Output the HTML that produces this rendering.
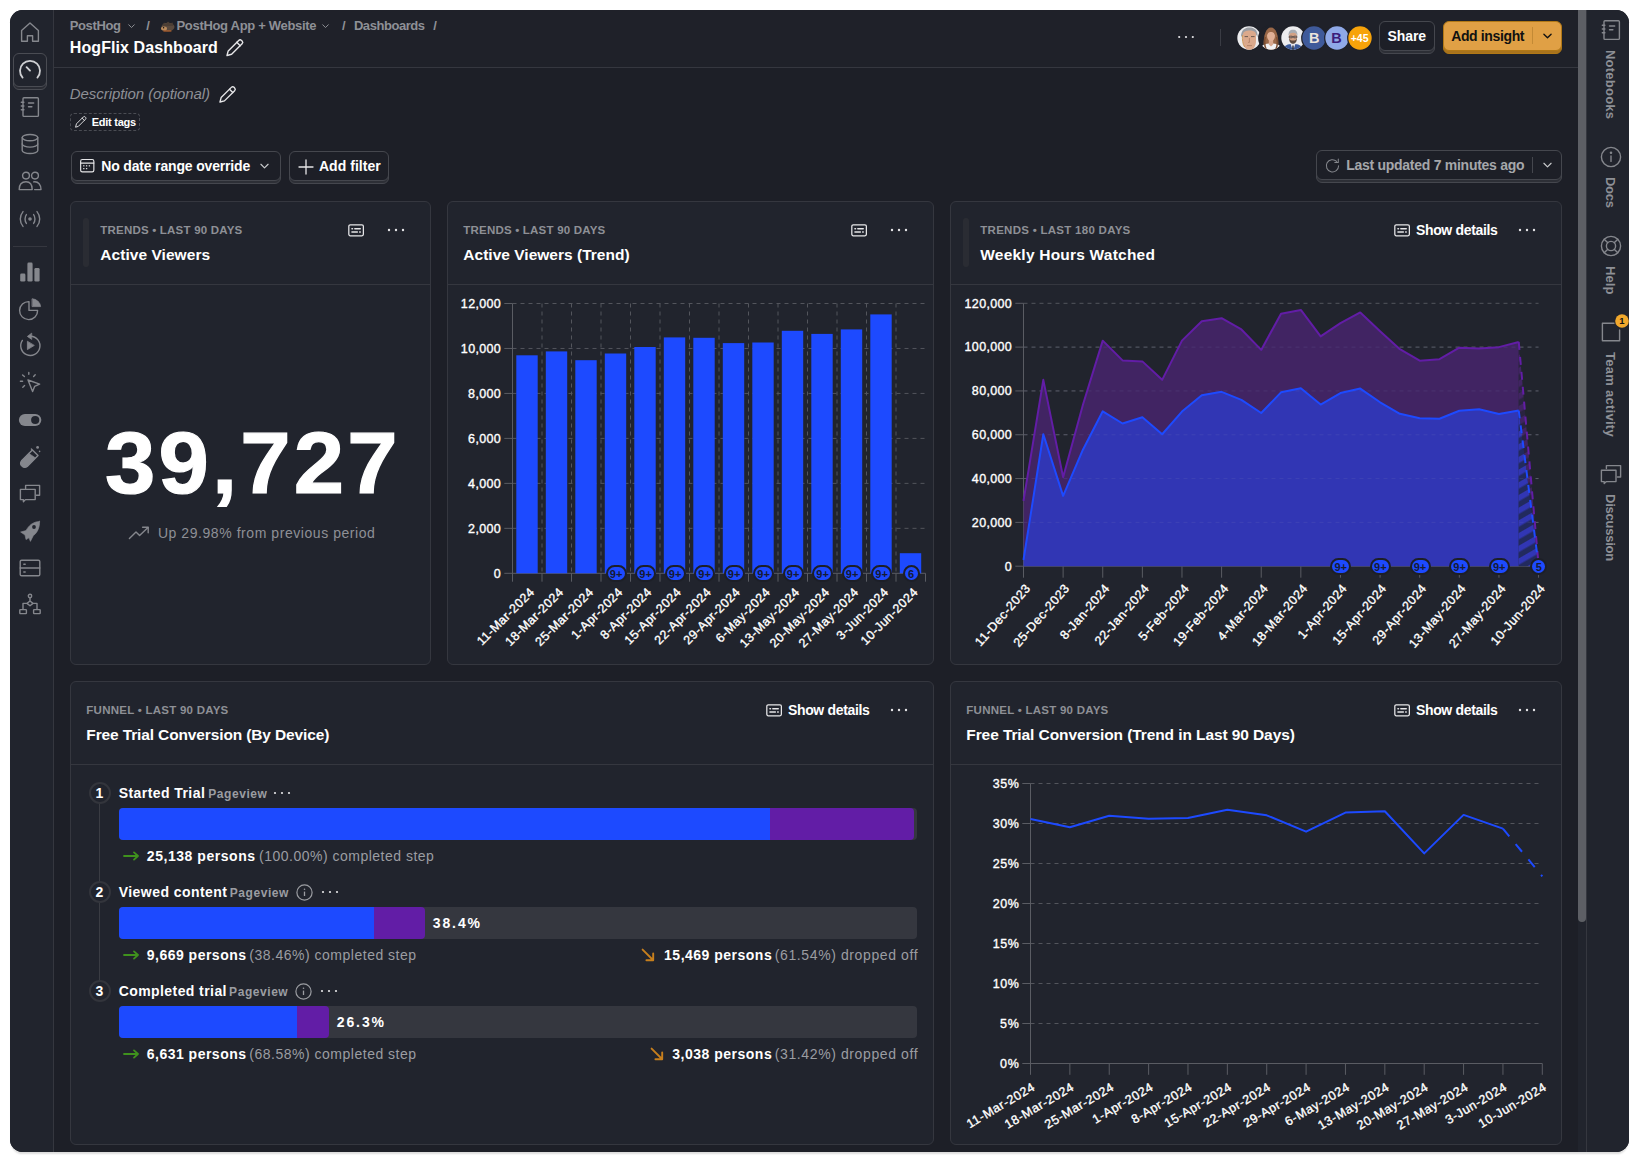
<!DOCTYPE html>
<html lang="en"><head><meta charset="utf-8"><title>HogFlix Dashboard • PostHog</title>
<style>

html,body{margin:0;padding:0;background:#fff;}
body{width:1639px;height:1162px;position:relative;overflow:hidden;font-family:"Liberation Sans", sans-serif;}
.t{position:absolute;white-space:nowrap;}
.abs{position:absolute;}
#win{position:absolute;left:10px;top:10px;width:1619px;height:1142px;background:#1d1f27;border-radius:12.5px;overflow:hidden;box-shadow:0 3px 2px -1px rgba(0,0,0,.14);}
.card{position:absolute;background:#21242d;border:1px solid #35373f;border-radius:6px;box-sizing:border-box;}
.hr{position:absolute;height:1px;background:#35373f;}
.vr{position:absolute;width:1px;background:#35373f;}
.btn{position:absolute;box-sizing:border-box;}
.btn .fr{position:absolute;left:0;right:0;top:3px;bottom:0;border-radius:6px;box-sizing:border-box;border:1px solid #45474e;background:#2d2f36;}
.btn .fc{position:absolute;left:0;right:0;top:0;bottom:3px;border-radius:6px;box-sizing:border-box;border:1px solid #45474e;background:#1d1f27;}
svg{position:absolute;overflow:visible;}
.ic{fill:none;stroke:#85878d;stroke-width:1.4;stroke-linecap:round;stroke-linejoin:round;}
.icw2{fill:none;stroke:#cfd0d3;stroke-width:1.4;stroke-linecap:round;stroke-linejoin:round;}
.icw{fill:none;stroke:#e6e6e8;stroke-width:1.4;stroke-linecap:round;stroke-linejoin:round;}

</style></head>
<body>
<header aria-label="Top bar">
<div id="win"></div>
<div class="abs" style="left:10px;top:10px;width:43px;height:1142px;background:#21242d;border-radius:12.5px 0 0 12.5px"></div>
<div class="vr" style="left:53px;top:10px;height:1142px"></div>
<div class="abs" style="left:54px;top:10px;width:1524px;height:57px;background:#1f2129"></div>
<div class="hr" style="left:54px;top:67px;width:1524px"></div>
<div class="abs" style="left:1578px;top:10px;width:8px;height:1142px;background:#21242d"></div>
<div class="abs" style="left:1578px;top:10px;width:8px;height:912px;background:#5d5f65;border-radius:0 0 4px 4px"></div>
<div class="abs" style="left:1586px;top:10px;width:43px;height:1142px;background:#21242d;border-radius:0 12.5px 12.5px 0"></div>
<div class="vr" style="left:1586px;top:10px;height:1142px"></div>
<span class="t" style="left:69.80px;top:16.80px;line-height:17px;font-size:13px;font-weight:700;color:#8e9096;letter-spacing:-0.392px;">PostHog</span>
<svg style="left:127.69999999999999px;top:22.650000000000002px" width="7" height="6.3" viewBox="0 0 10 9"><path d="M1 2.5L5 6.5L9 2.5" fill="none" stroke="#8e9096" stroke-width="1.4" stroke-linecap="round" stroke-linejoin="round"/></svg>
<span class="t" style="left:146.30px;top:16.80px;line-height:17px;font-size:13px;font-weight:700;color:#8e9096;">/</span>
<svg style="left:159.5px;top:19.5px" width="15" height="12" viewBox="0 0 15 12"><ellipse cx="8" cy="7" rx="6.5" ry="4.2" fill="#5a4a3e"/><path d="M2 6 L4 2.5 L6 4 L8 1.5 L10 3.5 L12.5 2.5 L13.5 6z" fill="#4d3f35"/><ellipse cx="4" cy="8.6" rx="3" ry="2" fill="#b98a5c"/><circle cx="3.6" cy="7.8" r=".7" fill="#111"/><path d="M3.4 11h8" stroke="#c4682c" stroke-width="1.1"/></svg>
<span class="t" style="left:176.50px;top:16.80px;line-height:17px;font-size:13px;font-weight:700;color:#8e9096;letter-spacing:-0.313px;">PostHog App + Website</span>
<svg style="left:322.4px;top:22.650000000000002px" width="7" height="6.3" viewBox="0 0 10 9"><path d="M1 2.5L5 6.5L9 2.5" fill="none" stroke="#8e9096" stroke-width="1.4" stroke-linecap="round" stroke-linejoin="round"/></svg>
<span class="t" style="left:342.00px;top:16.80px;line-height:17px;font-size:13px;font-weight:700;color:#8e9096;">/</span>
<span class="t" style="left:353.90px;top:16.80px;line-height:17px;font-size:13px;font-weight:700;color:#8e9096;letter-spacing:-0.438px;">Dashboards</span>
<span class="t" style="left:433.30px;top:16.80px;line-height:17px;font-size:13px;font-weight:700;color:#8e9096;">/</span>
<span class="t" style="left:69.80px;top:37.00px;line-height:21px;font-size:16px;font-weight:700;color:#fff;letter-spacing:0.088px;">HogFlix Dashboard</span>
<svg style="left:226.05px;top:39.05px" width="17.5" height="17.5" viewBox="3.5 3 17.5 17.5"><g class="icw" stroke-width="1.31"><path d="M4.5 19.5l1.2-4.6L16.2 4.4a2 2 0 0 1 2.8 0l.6.6a2 2 0 0 1 0 2.8L9.1 18.3z"/><path d="M14.3 6.3l3.4 3.4"/></g></svg>
<svg style="left:1175.7px;top:34.4px" width="20" height="6" viewBox="0 0 20 6"><circle cx="3.2" cy="3" r="1.1" fill="#e6e6e8"/><circle cx="10.0" cy="3" r="1.1" fill="#e6e6e8"/><circle cx="16.8" cy="3" r="1.1" fill="#e6e6e8"/></svg>
<div class="vr" style="left:1220px;top:29px;height:17px;background:#3a3c44"></div>
<svg style="left:1235.7px;top:24.700000000000003px" width="26" height="26" viewBox="0 0 26 26"><defs><clipPath id="c1248"><circle cx="13" cy="13" r="11.7"/></clipPath></defs><circle cx="13" cy="13" r="12.9" fill="#1f2129"/><circle cx="13" cy="13" r="11.7" fill="#ececee"/><g clip-path="url(#c1248)"><path d="M5 12C5 5 9 2.6 13.5 2.6S22 5 21.6 12L20 9.5H7z" fill="#9a9da3"/><path d="M7 9.6C7 6.6 10 5.6 13.6 5.6S20 6.8 20 9.6V16C20 21 17 25.5 13.6 25.5S7 21 7 16z" fill="#dba98c"/><path d="M8.6 11.6H12M15 11.6H18.6" stroke="#6d5a50" stroke-width="1"/><path d="M13.4 13V17.4H12.2M11 20.6H16" stroke="#b07f66" stroke-width=".9" fill="none"/><path d="M6.6 10C6 14 6.6 19 8.6 22" stroke="#c4863a" stroke-width=".8" fill="none"/></g></svg>
<svg style="left:1258px;top:24.700000000000003px" width="26" height="26" viewBox="0 0 26 26"><defs><clipPath id="c1271"><circle cx="13" cy="13" r="11.7"/></clipPath></defs><circle cx="13" cy="13" r="12.9" fill="#1f2129"/><circle cx="13" cy="13" r="11.7" fill="#1f2129"/><g clip-path="url(#c1271)"><path d="M6 26C4.6 15 6.6 2.4 13 2.4S21.4 15 20 26z" fill="#9a6848"/><path d="M1.6 27C2.2 19.6 7 18.4 13 18.4S23.8 19.6 24.4 27z" fill="#f2f2f4"/><path d="M10.8 14.6H15.2V19.6L13 21.4L10.8 19.6z" fill="#d9a88e"/><ellipse cx="13" cy="10.8" rx="4" ry="5.4" fill="#e0b096"/><path d="M8.4 11.6C8.2 6 10 4 13 4S17.8 6 17.6 11.6C16.6 7.8 15 6.8 13 7C11 6.8 9.4 7.8 8.4 11.6z" fill="#9a6848"/><path d="M7.2 12C6.2 17 6.8 22 8.4 25M18.8 12C19.8 17 19.2 22 17.6 25" stroke="#7a4c30" stroke-width="1.5" fill="none"/></g></svg>
<svg style="left:1280.3px;top:24.700000000000003px" width="26" height="26" viewBox="0 0 26 26"><defs><clipPath id="c1293"><circle cx="13" cy="13" r="11.7"/></clipPath></defs><circle cx="13" cy="13" r="12.9" fill="#1f2129"/><circle cx="13" cy="13" r="11.7" fill="#ececee"/><g clip-path="url(#c1293)"><path d="M2.6 27C3 20.4 7 19 13 19S23 20.4 23.4 27z" fill="#3b5a9a"/><path d="M10.6 19L13 26L15.4 19z" fill="#e8e8ee"/><path d="M12.4 20.4H13.6L14 26H12z" fill="#1d2438"/><ellipse cx="13" cy="12" rx="4.2" ry="5.4" fill="#d3a184"/><path d="M8.6 11C8.2 6.6 10 4.8 13 4.8S17.8 6.6 17.4 11C16.8 8.6 15.6 7.8 13 7.8S9.2 8.6 8.6 11z" fill="#a9acb2"/><path d="M9 13.6C9.4 17.6 11 18.8 13 18.8S16.6 17.6 17 13.6C16 15.4 14.6 15.6 13 15.6S10 15.4 9 13.6z" fill="#5d4a3e"/><path d="M9.2 11.2H12.2V12.8H9.2zM13.8 11.2H16.8V12.8H13.8zM12.2 11.8H13.8" stroke="#3a3a40" stroke-width=".7" fill="none"/></g></svg>
<svg style="left:1301.2px;top:24.700000000000003px" width="26" height="26" viewBox="0 0 26 26"><circle cx="13" cy="13" r="12.9" fill="#1f2129"/><circle cx="13" cy="13" r="11.7" fill="#3f5a9a"/></svg>
<span class="t" style="left:1314.20px;transform:translateX(-50%);top:28.50px;line-height:19px;font-size:14.5px;font-weight:700;color:#ece4dc;">B</span>
<svg style="left:1323.5px;top:24.700000000000003px" width="26" height="26" viewBox="0 0 26 26"><circle cx="13" cy="13" r="12.9" fill="#1f2129"/><circle cx="13" cy="13" r="11.7" fill="#8fa9e8"/></svg>
<span class="t" style="left:1336.50px;transform:translateX(-50%);top:28.50px;line-height:19px;font-size:14.5px;font-weight:700;color:#3b1c7a;">B</span>
<svg style="left:1346.6px;top:24.700000000000003px" width="26" height="26" viewBox="0 0 26 26"><circle cx="13" cy="13" r="12.9" fill="#1f2129"/><circle cx="13" cy="13" r="11.7" fill="#f7a30a"/></svg>
<span class="t" style="left:1359.60px;transform:translateX(-50%);top:31.00px;line-height:14px;font-size:10.5px;font-weight:700;color:#fff;">+45</span>
<div class="btn " style="left:1379px;top:21px;width:56px;height:33px"><div class="fr"></div><div class="fc"></div></div>
<span class="t" style="left:1387.50px;top:26.60px;line-height:18px;font-size:14px;font-weight:700;color:#fff;letter-spacing:-0.080px;">Share</span>
<div class="btn" style="left:1443px;top:21px;width:119px;height:33px"><div class="fr" style="background:#a8731d;border-color:#b17816"></div><div class="fc" style="background:#e0a045;border-color:#b17816"></div></div>
<span class="t" style="left:1451.20px;top:26.60px;line-height:18px;font-size:14px;font-weight:700;color:#111;letter-spacing:-0.370px;">Add insight</span>
<div class="vr" style="left:1532px;top:27px;height:17px;background:#c38a35"></div>
<svg style="left:1542.5px;top:32.25px" width="9" height="8.1" viewBox="0 0 10 9"><path d="M1 2.5L5 6.5L9 2.5" fill="none" stroke="#111" stroke-width="1.5" stroke-linecap="round" stroke-linejoin="round"/></svg>
</header>
<nav aria-label="Main navigation">
<svg style="left:18.0px;top:20.0px" width="24" height="24" viewBox="0 0 24 24"><g class="ic"><path d="M3.6 10.5 L12 3 L20.4 10.5 V21.2 H14.6 V15.8 H9.4 V21.2 H3.6z"/></g></svg>
<div class="btn" style="left:13px;top:53px;width:34px;height:37px"><div class="fr" style="border-color:#4a4c53;background:#2a2c34"></div><div class="fc" style="border-color:#4a4c53;background:#21242d"></div></div>
<svg style="left:18.0px;top:58.0px" width="24" height="24" viewBox="0 0 24 24"><g class="icw2"><path d="M4.6 19.6 A10 10 0 1 1 19.4 19.6" stroke-width="1.8"/><path d="M8.6 9.2 L12 12.6" stroke-width="1.9"/></g></svg>
<svg style="left:18.0px;top:95.0px" width="24" height="24" viewBox="0 0 24 24"><g class="ic"><rect x="5" y="2.8" width="15.4" height="18.6" rx="1"/><path d="M3.3 7.2h2.6M3.3 11h2.6M3.3 14.8h2.6M10.5 8h5.2M10.5 11.8h3.4"/></g></svg>
<svg style="left:18.0px;top:132.0px" width="24" height="24" viewBox="0 0 24 24"><g class="ic"><ellipse cx="12" cy="5.6" rx="7.8" ry="3.1"/><path d="M4.2 5.6V18.4C4.2 20.1 7.7 21.5 12 21.5S19.8 20.1 19.8 18.4V5.6"/><path d="M4.2 12C4.2 13.7 7.7 15.1 12 15.1S19.8 13.7 19.8 12"/></g></svg>
<svg style="left:18.0px;top:169.3px" width="24" height="24" viewBox="0 0 24 24"><g class="ic"><circle cx="8" cy="6.6" r="3.4"/><circle cx="17" cy="6.6" r="3.4"/><path d="M1.2 20.6C1.2 15.6 4 12.8 8 12.8S14.2 15.6 14.2 20.6z"/><path d="M15.6 12.9C20.5 12.2 23 15.8 23 20.6H16.6"/></g></svg>
<svg style="left:18.0px;top:206.5px" width="24" height="24" viewBox="0 0 24 24"><g class="ic"><circle cx="12" cy="12" r="1.1" fill="#85878d"/><path d="M8.4 7.6C6.6 10 6.6 14 8.4 16.4M15.6 7.6C17.4 10 17.4 14 15.6 16.4M5 4.6C1.4 9 1.4 15 5 19.4M19 4.6C22.6 9 22.6 15 19 19.4"/></g></svg>
<div class="hr" style="left:13px;top:246px;width:34px"></div>
<svg style="left:18.0px;top:260.0px" width="24" height="24" viewBox="0 0 24 24"><g class="ic"><rect x="2.2" y="13.6" width="5.2" height="8" rx="1.3" fill="#85878d" stroke="none"/><rect x="9.4" y="2.6" width="5.2" height="19" rx="1.3" fill="#85878d" stroke="none"/><rect x="16.4" y="8" width="5.2" height="13.6" rx="1.3" fill="#85878d" stroke="none"/></g></svg>
<svg style="left:18.0px;top:297.0px" width="24" height="24" viewBox="0 0 24 24"><g class="ic"><path d="M11 4.6A9 9 0 1 0 19.6 13.4H11z"/><path d="M14.4 1.8A8.6 8.6 0 0 1 22.6 9.6H14.4z" fill="#85878d" stroke-width=".8"/></g></svg>
<svg style="left:18.0px;top:333.0px" width="24" height="24" viewBox="0 0 24 24"><g class="ic"><path d="M12.6 3.2A9.6 9.6 0 1 1 4.4 7.4"/><path d="M13.4 0.4L9.4 3.4L13.4 6.2z" fill="#85878d" stroke-width=".8"/><path d="M9.4 8.6V16.6L16 12.6z" fill="#85878d" stroke-width=".8"/></g></svg>
<svg style="left:18.0px;top:370.0px" width="24" height="24" viewBox="0 0 24 24"><g class="ic"><path d="M10 10L21.6 14.2L16.6 16.4L14.6 21.6z"/><path d="M10.8 2.4V4.2M4.6 5L6.4 6.6M17.2 4.8L15.6 6.4M2.4 11.2h2.2M4.8 17.2L6.6 15.6"/></g></svg>
<svg style="left:18.0px;top:408.0px" width="24" height="24" viewBox="0 0 24 24"><g class="ic"><rect x="0.9" y="6" width="22.4" height="12" rx="6" fill="#85878d" stroke="none"/><circle cx="17.2" cy="12" r="4.1" fill="#21242d" stroke="none"/></g></svg>
<svg style="left:18.0px;top:444.5px" width="24" height="24" viewBox="0 0 24 24"><g class="ic"><path d="M13.4 4L20 10.6M14.4 5L3.6 15.8A4 4 0 0 0 9.2 21.4L20 10.6" /><path d="M11 8.4L17.6 13L9.2 21.4A4 4 0 0 1 3.6 15.8z" fill="#85878d" stroke-width=".6"/><circle cx="19.6" cy="2.4" r="1.4" fill="#85878d" stroke="none"/><circle cx="21.6" cy="6.4" r=".8" fill="#85878d" stroke="none"/></g></svg>
<svg style="left:18.0px;top:482.0px" width="24" height="24" viewBox="0 0 24 24"><g class="ic"><path d="M7.6 6.4V3.4H21.6V13.2H18.4"/><path d="M2.4 7.4H17.2V17.6H7.4L5.4 19.8V17.6H2.4z"/></g></svg>
<svg style="left:18.0px;top:519.0px" width="24" height="24" viewBox="0 0 24 24"><g class="ic"><path d="M21.6 2.4C15 2.6 10.6 6.6 8 11.6L2.6 13L7 16L8 20.6L11 18.8L12.4 22.4L15.4 16.6C19.4 13.6 21.8 8.4 21.6 2.4z" fill="#85878d" stroke-width=".6"/><circle cx="16" cy="8" r="1.9" fill="#21242d" stroke="none"/></g></svg>
<svg style="left:18.0px;top:556.0px" width="24" height="24" viewBox="0 0 24 24"><g class="ic"><rect x="2.2" y="4.2" width="19.6" height="15.6" rx="1.4"/><path d="M2.2 12H21.8M5.8 8.2H7.2M5.8 16H7.2"/></g></svg>
<svg style="left:18.0px;top:593.0px" width="24" height="24" viewBox="0 0 24 24"><g class="ic"><circle cx="12" cy="3" r="1.7"/><path d="M12 4.8V8M12 8L15 10.4L12 12.8L9 10.4zM9 10.4H5V16.4M15 10.4H19V16.4"/><rect x="1.8" y="16.6" width="6.6" height="4" rx=".6"/><rect x="15.6" y="16.6" width="6.6" height="4" rx=".6"/></g></svg>
</nav>
<aside aria-label="Side panel">
<svg style="left:1598.7px;top:18.0px" width="24" height="24" viewBox="0 0 24 24"><g class="ic"><rect x="5" y="2.8" width="15.4" height="18.6" rx="1"/><path d="M3.3 7.2h2.6M3.3 11h2.6M3.3 14.8h2.6M10.5 8h5.2M10.5 11.8h3.4"/></g></svg>
<span class="t" style="left:1618.00px;top:50.30px;line-height:16px;font-size:13px;font-weight:700;color:#8e9096;letter-spacing:0.229px;transform-origin:0 0;transform:rotate(90deg)">Notebooks</span>
<svg style="left:1598.7px;top:145.2px" width="24" height="24" viewBox="0 0 24 24"><g class="ic"><circle cx="12" cy="12" r="9.6"/><path d="M12 11v5.4"/><circle cx="12" cy="7.8" r=".6" fill="#85878d"/></g></svg>
<span class="t" style="left:1618.00px;top:176.90px;line-height:16px;font-size:13px;font-weight:700;color:#8e9096;letter-spacing:-0.266px;transform-origin:0 0;transform:rotate(90deg)">Docs</span>
<svg style="left:1598.7px;top:234.0px" width="24" height="24" viewBox="0 0 24 24"><g class="ic"><circle cx="12" cy="12" r="9.6"/><circle cx="12" cy="12" r="4.6"/><path d="M5.2 5.2L8.8 8.8M18.8 5.2L15.2 8.8M5.2 18.8L8.8 15.2M18.8 18.8L15.2 15.2"/></g></svg>
<span class="t" style="left:1618.00px;top:266.00px;line-height:16px;font-size:13px;font-weight:700;color:#8e9096;letter-spacing:0.076px;transform-origin:0 0;transform:rotate(90deg)">Help</span>
<svg style="left:1598.7px;top:319.7px" width="24" height="24" viewBox="0 0 24 24"><g class="ic"><path d="M15 3.2H3.4V20.8H20.6V10"/></g></svg>
<svg style="left:1614.9px;top:314.3px" width="14" height="14" viewBox="0 0 14 14"><circle cx="7" cy="7" r="6.8" fill="#f1a82c"/></svg>
<span class="t" style="left:1621.90px;transform:translateX(-50%);top:315.40px;line-height:12px;font-size:9.5px;font-weight:700;color:#111;">1</span>
<span class="t" style="left:1618.00px;top:351.60px;line-height:16px;font-size:13px;font-weight:700;color:#8e9096;letter-spacing:0.273px;transform-origin:0 0;transform:rotate(90deg)">Team activity</span>
<svg style="left:1598.7px;top:462.5px" width="24" height="24" viewBox="0 0 24 24"><g class="ic"><path d="M7.4 5.6V2.6H21.6V14H18.4"/><path d="M2.4 7.2H17V18.6H7.4L5.2 20.6V18.6H2.4z"/></g></svg>
<span class="t" style="left:1618.00px;top:493.60px;line-height:16px;font-size:13px;font-weight:700;color:#8e9096;letter-spacing:-0.240px;transform-origin:0 0;transform:rotate(90deg)">Discussion</span>
</aside>
<main>
<section aria-label="Dashboard controls">
<span class="t" style="left:69.80px;top:84.00px;line-height:20px;font-size:15px;font-weight:400;color:#8e9096;font-style:italic;letter-spacing:-0.068px;">Description (optional)</span>
<svg style="left:219.3px;top:85.5px" width="17" height="17" viewBox="3.5 3 17.5 17.5"><g class="icw" stroke-width="1.35"><path d="M4.5 19.5l1.2-4.6L16.2 4.4a2 2 0 0 1 2.8 0l.6.6a2 2 0 0 1 0 2.8L9.1 18.3z"/><path d="M14.3 6.3l3.4 3.4"/></g></svg>
<div class="abs" style="left:70px;top:113px;width:70px;height:18px;border:1px dashed #4a4c53;border-radius:4px;box-sizing:border-box"></div>
<svg style="left:75.05px;top:116.25px" width="11.5" height="11.5" viewBox="3.5 3 17.5 17.5"><g class="icw" stroke-width="2.00"><path d="M4.5 19.5l1.2-4.6L16.2 4.4a2 2 0 0 1 2.8 0l.6.6a2 2 0 0 1 0 2.8L9.1 18.3z"/><path d="M14.3 6.3l3.4 3.4"/></g></svg>
<span class="t" style="left:91.80px;top:115.00px;line-height:14px;font-size:11px;font-weight:700;color:#fff;letter-spacing:-0.269px;">Edit tags</span>
<div class="btn " style="left:71px;top:151px;width:210px;height:33px"><div class="fr"></div><div class="fc"></div></div>
<svg style="left:79px;top:157.3px" width="16.5" height="16.5" viewBox="0 0 20 20"><g class="icw" stroke-width="1.3"><rect x="2" y="3" width="16" height="15" rx="2"/><path d="M2 7.4H18"/></g><g fill="#e6e6e8"><rect x="5" y="10" width="1.6" height="1.4"/><rect x="8.4" y="10" width="1.6" height="1.4"/><rect x="11.8" y="10" width="1.6" height="1.4"/><rect x="5" y="13.4" width="1.6" height="1.4"/><rect x="8.4" y="13.4" width="1.6" height="1.4"/></g></svg>
<span class="t" style="left:101.20px;top:157.00px;line-height:18px;font-size:14px;font-weight:700;color:#fff;letter-spacing:-0.162px;">No date range override</span>
<svg style="left:259.5px;top:162.25px" width="9" height="8.1" viewBox="0 0 10 9"><path d="M1 2.5L5 6.5L9 2.5" fill="none" stroke="#c9cacd" stroke-width="1.3" stroke-linecap="round" stroke-linejoin="round"/></svg>
<div class="btn " style="left:289px;top:151px;width:100px;height:33px"><div class="fr"></div><div class="fc"></div></div>
<svg style="left:298px;top:158.5px" width="16" height="16" viewBox="0 0 16 16"><path d="M8 1V15M1 8H15" stroke="#e6e6e8" stroke-width="1.3" stroke-linecap="round"/></svg>
<span class="t" style="left:318.90px;top:157.00px;line-height:18px;font-size:14px;font-weight:700;color:#fff;letter-spacing:0.050px;">Add filter</span>
<div class="btn " style="left:1315.5px;top:150px;width:246.5px;height:33px"><div class="fr"></div><div class="fc"></div></div>
<svg style="left:1323.8px;top:156.8px" width="17.5" height="17.5" viewBox="0 0 24 24"><g class="ic" stroke="#a5a7ab" stroke-width="1.7"><path d="M20 12a8.4 8.4 0 1 1 -2.6 -6"/><path d="M19.6 2.6V7.4H14.8"/></g></svg>
<span class="t" style="left:1346.20px;top:156.00px;line-height:18px;font-size:14px;font-weight:700;color:#a5a7ab;letter-spacing:-0.270px;">Last updated 7 minutes ago</span>
<div class="vr" style="left:1532px;top:157px;height:16px;background:#45474e"></div>
<svg style="left:1542.5px;top:161.45px" width="9" height="8.1" viewBox="0 0 10 9"><path d="M1 2.5L5 6.5L9 2.5" fill="none" stroke="#c9cacd" stroke-width="1.3" stroke-linecap="round" stroke-linejoin="round"/></svg>
</section>
<section aria-label="Active Viewers">
<div class="card" style="left:70px;top:201px;width:361px;height:464px"></div>
<div class="hr" style="left:71px;top:284px;width:359px"></div>
<div class="abs" style="left:83px;top:218px;width:6px;height:49px;background:#2a2c33;border-radius:3px"></div>
<span class="t" style="left:100.30px;top:222.50px;line-height:15px;font-size:11.5px;font-weight:700;color:#8e9096;letter-spacing:0.209px;">TRENDS • LAST 90 DAYS</span>
<span class="t" style="left:100.30px;top:245.00px;line-height:20px;font-size:15.5px;font-weight:700;color:#fff;letter-spacing:0.050px;">Active Viewers</span>
<svg style="left:386px;top:227px" width="20" height="6" viewBox="0 0 20 6"><circle cx="3.0" cy="3" r="1.2" fill="#e6e6e8"/><circle cx="10.0" cy="3" r="1.2" fill="#e6e6e8"/><circle cx="17.0" cy="3" r="1.2" fill="#e6e6e8"/></svg>
<svg style="left:347.8px;top:223.5px" width="16.2" height="12.6" viewBox="0 0 18 14"><g class="icw" stroke-width="1.6"><rect x=".9" y=".9" width="16.2" height="12.2" rx="1.6"/><path d="M4.4 5.4H5M7.6 5.4H13.6M4.4 8.8H10.4M13 8.8H13.6" stroke-width="1.7"/></g></svg>
<span class="t" style="left:105.00px;top:417.80px;line-height:90px;font-size:87px;font-weight:700;color:#fff;letter-spacing:3.038px;-webkit-text-stroke:1.2px #fff;transform-origin:0 50%;transform:scaleX(1.04);">39,727</span>
<svg style="left:127.5px;top:524.5px" width="22" height="16" viewBox="0 0 22 16"><g class="ic" stroke="#8e9096" stroke-width="1.5"><path d="M1.4 13.6L8 7L11.6 10.6L20 2.4"/><path d="M14.6 2.2H20.2V7.8"/></g></svg>
<span class="t" style="left:157.90px;top:524.40px;line-height:18px;font-size:14px;font-weight:400;color:#8e9096;letter-spacing:0.559px;">Up 29.98% from previous period</span>
</section>
<section aria-label="Active Viewers (Trend)">
<div class="card" style="left:447px;top:201px;width:487px;height:464px"></div>
<div class="hr" style="left:448px;top:284px;width:485px"></div>
<span class="t" style="left:463.30px;top:222.50px;line-height:15px;font-size:11.5px;font-weight:700;color:#8e9096;letter-spacing:0.209px;">TRENDS • LAST 90 DAYS</span>
<span class="t" style="left:463.30px;top:245.00px;line-height:20px;font-size:15.5px;font-weight:700;color:#fff;letter-spacing:0.015px;">Active Viewers (Trend)</span>
<svg style="left:889px;top:227px" width="20" height="6" viewBox="0 0 20 6"><circle cx="3.0" cy="3" r="1.2" fill="#e6e6e8"/><circle cx="10.0" cy="3" r="1.2" fill="#e6e6e8"/><circle cx="17.0" cy="3" r="1.2" fill="#e6e6e8"/></svg>
<svg style="left:850.8px;top:223.5px" width="16.2" height="12.6" viewBox="0 0 18 14"><g class="icw" stroke-width="1.6"><rect x=".9" y=".9" width="16.2" height="12.2" rx="1.6"/><path d="M4.4 5.4H5M7.6 5.4H13.6M4.4 8.8H10.4M13 8.8H13.6" stroke-width="1.7"/></g></svg>
<svg style="left:0px;top:0px" width="1639" height="1162" viewBox="0 0 1639 1162"><line x1="512.5" y1="303.5" x2="925.5" y2="303.5" stroke="#53555c" stroke-width="1" stroke-dasharray="4 4"/><line x1="512.5" y1="348.46666666666664" x2="925.5" y2="348.46666666666664" stroke="#53555c" stroke-width="1" stroke-dasharray="4 4"/><line x1="512.5" y1="393.43333333333334" x2="925.5" y2="393.43333333333334" stroke="#53555c" stroke-width="1" stroke-dasharray="4 4"/><line x1="512.5" y1="438.4" x2="925.5" y2="438.4" stroke="#53555c" stroke-width="1" stroke-dasharray="4 4"/><line x1="512.5" y1="483.3666666666667" x2="925.5" y2="483.3666666666667" stroke="#53555c" stroke-width="1" stroke-dasharray="4 4"/><line x1="512.5" y1="528.3333333333333" x2="925.5" y2="528.3333333333333" stroke="#53555c" stroke-width="1" stroke-dasharray="4 4"/><line x1="504.3" y1="303.5" x2="512.5" y2="303.5" stroke="#5a5c63" stroke-width="1"/><line x1="504.3" y1="348.46666666666664" x2="512.5" y2="348.46666666666664" stroke="#5a5c63" stroke-width="1"/><line x1="504.3" y1="393.43333333333334" x2="512.5" y2="393.43333333333334" stroke="#5a5c63" stroke-width="1"/><line x1="504.3" y1="438.4" x2="512.5" y2="438.4" stroke="#5a5c63" stroke-width="1"/><line x1="504.3" y1="483.3666666666667" x2="512.5" y2="483.3666666666667" stroke="#5a5c63" stroke-width="1"/><line x1="504.3" y1="528.3333333333333" x2="512.5" y2="528.3333333333333" stroke="#5a5c63" stroke-width="1"/><line x1="504.3" y1="573.3" x2="512.5" y2="573.3" stroke="#5a5c63" stroke-width="1"/><line x1="542.0" y1="303.5" x2="542.0" y2="573.3" stroke="#53555c" stroke-width="1" stroke-dasharray="4 4"/><line x1="571.5" y1="303.5" x2="571.5" y2="573.3" stroke="#53555c" stroke-width="1" stroke-dasharray="4 4"/><line x1="601.0" y1="303.5" x2="601.0" y2="573.3" stroke="#53555c" stroke-width="1" stroke-dasharray="4 4"/><line x1="630.5" y1="303.5" x2="630.5" y2="573.3" stroke="#53555c" stroke-width="1" stroke-dasharray="4 4"/><line x1="660.0" y1="303.5" x2="660.0" y2="573.3" stroke="#53555c" stroke-width="1" stroke-dasharray="4 4"/><line x1="689.5" y1="303.5" x2="689.5" y2="573.3" stroke="#53555c" stroke-width="1" stroke-dasharray="4 4"/><line x1="719.0" y1="303.5" x2="719.0" y2="573.3" stroke="#53555c" stroke-width="1" stroke-dasharray="4 4"/><line x1="748.5" y1="303.5" x2="748.5" y2="573.3" stroke="#53555c" stroke-width="1" stroke-dasharray="4 4"/><line x1="778.0" y1="303.5" x2="778.0" y2="573.3" stroke="#53555c" stroke-width="1" stroke-dasharray="4 4"/><line x1="807.5" y1="303.5" x2="807.5" y2="573.3" stroke="#53555c" stroke-width="1" stroke-dasharray="4 4"/><line x1="837.0" y1="303.5" x2="837.0" y2="573.3" stroke="#53555c" stroke-width="1" stroke-dasharray="4 4"/><line x1="866.5" y1="303.5" x2="866.5" y2="573.3" stroke="#53555c" stroke-width="1" stroke-dasharray="4 4"/><line x1="896.0" y1="303.5" x2="896.0" y2="573.3" stroke="#53555c" stroke-width="1" stroke-dasharray="4 4"/><line x1="512.5" y1="303.5" x2="512.5" y2="581.6999999999999" stroke="#5a5c63" stroke-width="1"/><line x1="512.5" y1="573.3" x2="925.5" y2="573.3" stroke="#5a5c63" stroke-width="1"/><line x1="542.0" y1="573.3" x2="542.0" y2="581.6999999999999" stroke="#5a5c63" stroke-width="1"/><line x1="571.5" y1="573.3" x2="571.5" y2="581.6999999999999" stroke="#5a5c63" stroke-width="1"/><line x1="601.0" y1="573.3" x2="601.0" y2="581.6999999999999" stroke="#5a5c63" stroke-width="1"/><line x1="630.5" y1="573.3" x2="630.5" y2="581.6999999999999" stroke="#5a5c63" stroke-width="1"/><line x1="660.0" y1="573.3" x2="660.0" y2="581.6999999999999" stroke="#5a5c63" stroke-width="1"/><line x1="689.5" y1="573.3" x2="689.5" y2="581.6999999999999" stroke="#5a5c63" stroke-width="1"/><line x1="719.0" y1="573.3" x2="719.0" y2="581.6999999999999" stroke="#5a5c63" stroke-width="1"/><line x1="748.5" y1="573.3" x2="748.5" y2="581.6999999999999" stroke="#5a5c63" stroke-width="1"/><line x1="778.0" y1="573.3" x2="778.0" y2="581.6999999999999" stroke="#5a5c63" stroke-width="1"/><line x1="807.5" y1="573.3" x2="807.5" y2="581.6999999999999" stroke="#5a5c63" stroke-width="1"/><line x1="837.0" y1="573.3" x2="837.0" y2="581.6999999999999" stroke="#5a5c63" stroke-width="1"/><line x1="866.5" y1="573.3" x2="866.5" y2="581.6999999999999" stroke="#5a5c63" stroke-width="1"/><line x1="896.0" y1="573.3" x2="896.0" y2="581.6999999999999" stroke="#5a5c63" stroke-width="1"/><line x1="925.5" y1="573.3" x2="925.5" y2="581.6999999999999" stroke="#5a5c63" stroke-width="1"/><rect x="516.30" y="355.3" width="21.4" height="218.00" fill="#1d4aff"/><rect x="545.80" y="351.4" width="21.4" height="221.90" fill="#1d4aff"/><rect x="575.30" y="360.2" width="21.4" height="213.10" fill="#1d4aff"/><rect x="604.80" y="353.5" width="21.4" height="219.80" fill="#1d4aff"/><rect x="634.30" y="347.0" width="21.4" height="226.30" fill="#1d4aff"/><rect x="663.80" y="337.4" width="21.4" height="235.90" fill="#1d4aff"/><rect x="693.30" y="337.8" width="21.4" height="235.50" fill="#1d4aff"/><rect x="722.80" y="343.1" width="21.4" height="230.20" fill="#1d4aff"/><rect x="752.30" y="342.5" width="21.4" height="230.80" fill="#1d4aff"/><rect x="781.80" y="330.8" width="21.4" height="242.50" fill="#1d4aff"/><rect x="811.30" y="333.9" width="21.4" height="239.40" fill="#1d4aff"/><rect x="840.80" y="329.4" width="21.4" height="243.90" fill="#1d4aff"/><rect x="870.30" y="314.4" width="21.4" height="258.90" fill="#1d4aff"/><rect x="899.80" y="553.2" width="21.4" height="20.10" fill="#1d4aff"/></svg>
<span class="t" style="right:1138.20px;margin-right:-0.344px;top:295.80px;line-height:16px;font-size:12.5px;font-weight:400;color:#fff;letter-spacing:0.344px;-webkit-text-stroke:0.35px #fff;">12,000</span>
<span class="t" style="right:1138.20px;margin-right:-0.344px;top:340.77px;line-height:16px;font-size:12.5px;font-weight:400;color:#fff;letter-spacing:0.344px;-webkit-text-stroke:0.35px #fff;">10,000</span>
<span class="t" style="right:1138.20px;margin-right:-0.352px;top:385.73px;line-height:16px;font-size:12.5px;font-weight:400;color:#fff;letter-spacing:0.352px;-webkit-text-stroke:0.35px #fff;">8,000</span>
<span class="t" style="right:1138.20px;margin-right:-0.352px;top:430.70px;line-height:16px;font-size:12.5px;font-weight:400;color:#fff;letter-spacing:0.352px;-webkit-text-stroke:0.35px #fff;">6,000</span>
<span class="t" style="right:1138.20px;margin-right:-0.352px;top:475.67px;line-height:16px;font-size:12.5px;font-weight:400;color:#fff;letter-spacing:0.352px;-webkit-text-stroke:0.35px #fff;">4,000</span>
<span class="t" style="right:1138.20px;margin-right:-0.352px;top:520.63px;line-height:16px;font-size:12.5px;font-weight:400;color:#fff;letter-spacing:0.352px;-webkit-text-stroke:0.35px #fff;">2,000</span>
<span class="t" style="right:1138.20px;margin-right:-0.313px;top:565.60px;line-height:16px;font-size:12.5px;font-weight:400;color:#fff;letter-spacing:0.313px;-webkit-text-stroke:0.35px #fff;">0</span>
<span class="t" style="right:1107.35px;margin-right:-0.424px;top:583.20px;line-height:14px;font-size:12.5px;font-weight:400;color:#fff;letter-spacing:0.424px;transform-origin:100% 50%;transform:rotate(-45deg);-webkit-text-stroke:0.35px #fff;">11-Mar-2024</span>
<span class="t" style="right:1077.85px;margin-right:-0.429px;top:583.20px;line-height:14px;font-size:12.5px;font-weight:400;color:#fff;letter-spacing:0.429px;transform-origin:100% 50%;transform:rotate(-45deg);-webkit-text-stroke:0.35px #fff;">18-Mar-2024</span>
<span class="t" style="right:1048.35px;margin-right:-0.429px;top:583.20px;line-height:14px;font-size:12.5px;font-weight:400;color:#fff;letter-spacing:0.429px;transform-origin:100% 50%;transform:rotate(-45deg);-webkit-text-stroke:0.35px #fff;">25-Mar-2024</span>
<span class="t" style="right:1018.85px;margin-right:-0.417px;top:583.20px;line-height:14px;font-size:12.5px;font-weight:400;color:#fff;letter-spacing:0.417px;transform-origin:100% 50%;transform:rotate(-45deg);-webkit-text-stroke:0.35px #fff;">1-Apr-2024</span>
<div class="abs" style="left:605.55px;top:565.10px;width:21px;height:17px;box-sizing:border-box;border:2px solid #1d1f27;border-radius:8.5px;background:#1d4aff"></div>
<span class="t" style="left:616.05px;transform:translateX(-50%);top:567.90px;line-height:12px;font-size:11px;font-weight:700;color:#161a33;">9+</span>
<span class="t" style="right:989.35px;margin-right:-0.417px;top:583.20px;line-height:14px;font-size:12.5px;font-weight:400;color:#fff;letter-spacing:0.417px;transform-origin:100% 50%;transform:rotate(-45deg);-webkit-text-stroke:0.35px #fff;">8-Apr-2024</span>
<div class="abs" style="left:635.05px;top:565.10px;width:21px;height:17px;box-sizing:border-box;border:2px solid #1d1f27;border-radius:8.5px;background:#1d4aff"></div>
<span class="t" style="left:645.55px;transform:translateX(-50%);top:567.90px;line-height:12px;font-size:11px;font-weight:700;color:#161a33;">9+</span>
<span class="t" style="right:959.85px;margin-right:-0.417px;top:583.20px;line-height:14px;font-size:12.5px;font-weight:400;color:#fff;letter-spacing:0.417px;transform-origin:100% 50%;transform:rotate(-45deg);-webkit-text-stroke:0.35px #fff;">15-Apr-2024</span>
<div class="abs" style="left:664.55px;top:565.10px;width:21px;height:17px;box-sizing:border-box;border:2px solid #1d1f27;border-radius:8.5px;background:#1d4aff"></div>
<span class="t" style="left:675.05px;transform:translateX(-50%);top:567.90px;line-height:12px;font-size:11px;font-weight:700;color:#161a33;">9+</span>
<span class="t" style="right:930.35px;margin-right:-0.417px;top:583.20px;line-height:14px;font-size:12.5px;font-weight:400;color:#fff;letter-spacing:0.417px;transform-origin:100% 50%;transform:rotate(-45deg);-webkit-text-stroke:0.35px #fff;">22-Apr-2024</span>
<div class="abs" style="left:694.05px;top:565.10px;width:21px;height:17px;box-sizing:border-box;border:2px solid #1d1f27;border-radius:8.5px;background:#1d4aff"></div>
<span class="t" style="left:704.55px;transform:translateX(-50%);top:567.90px;line-height:12px;font-size:11px;font-weight:700;color:#161a33;">9+</span>
<span class="t" style="right:900.85px;margin-right:-0.417px;top:583.20px;line-height:14px;font-size:12.5px;font-weight:400;color:#fff;letter-spacing:0.417px;transform-origin:100% 50%;transform:rotate(-45deg);-webkit-text-stroke:0.35px #fff;">29-Apr-2024</span>
<div class="abs" style="left:723.55px;top:565.10px;width:21px;height:17px;box-sizing:border-box;border:2px solid #1d1f27;border-radius:8.5px;background:#1d4aff"></div>
<span class="t" style="left:734.05px;transform:translateX(-50%);top:567.90px;line-height:12px;font-size:11px;font-weight:700;color:#161a33;">9+</span>
<span class="t" style="right:871.35px;margin-right:-0.445px;top:583.20px;line-height:14px;font-size:12.5px;font-weight:400;color:#fff;letter-spacing:0.445px;transform-origin:100% 50%;transform:rotate(-45deg);-webkit-text-stroke:0.35px #fff;">6-May-2024</span>
<div class="abs" style="left:753.05px;top:565.10px;width:21px;height:17px;box-sizing:border-box;border:2px solid #1d1f27;border-radius:8.5px;background:#1d4aff"></div>
<span class="t" style="left:763.55px;transform:translateX(-50%);top:567.90px;line-height:12px;font-size:11px;font-weight:700;color:#161a33;">9+</span>
<span class="t" style="right:841.85px;margin-right:-0.442px;top:583.20px;line-height:14px;font-size:12.5px;font-weight:400;color:#fff;letter-spacing:0.442px;transform-origin:100% 50%;transform:rotate(-45deg);-webkit-text-stroke:0.35px #fff;">13-May-2024</span>
<div class="abs" style="left:782.55px;top:565.10px;width:21px;height:17px;box-sizing:border-box;border:2px solid #1d1f27;border-radius:8.5px;background:#1d4aff"></div>
<span class="t" style="left:793.05px;transform:translateX(-50%);top:567.90px;line-height:12px;font-size:11px;font-weight:700;color:#161a33;">9+</span>
<span class="t" style="right:812.35px;margin-right:-0.442px;top:583.20px;line-height:14px;font-size:12.5px;font-weight:400;color:#fff;letter-spacing:0.442px;transform-origin:100% 50%;transform:rotate(-45deg);-webkit-text-stroke:0.35px #fff;">20-May-2024</span>
<div class="abs" style="left:812.05px;top:565.10px;width:21px;height:17px;box-sizing:border-box;border:2px solid #1d1f27;border-radius:8.5px;background:#1d4aff"></div>
<span class="t" style="left:822.55px;transform:translateX(-50%);top:567.90px;line-height:12px;font-size:11px;font-weight:700;color:#161a33;">9+</span>
<span class="t" style="right:782.85px;margin-right:-0.442px;top:583.20px;line-height:14px;font-size:12.5px;font-weight:400;color:#fff;letter-spacing:0.442px;transform-origin:100% 50%;transform:rotate(-45deg);-webkit-text-stroke:0.35px #fff;">27-May-2024</span>
<div class="abs" style="left:841.55px;top:565.10px;width:21px;height:17px;box-sizing:border-box;border:2px solid #1d1f27;border-radius:8.5px;background:#1d4aff"></div>
<span class="t" style="left:852.05px;transform:translateX(-50%);top:567.90px;line-height:12px;font-size:11px;font-weight:700;color:#161a33;">9+</span>
<span class="t" style="right:753.35px;margin-right:-0.422px;top:583.20px;line-height:14px;font-size:12.5px;font-weight:400;color:#fff;letter-spacing:0.422px;transform-origin:100% 50%;transform:rotate(-45deg);-webkit-text-stroke:0.35px #fff;">3-Jun-2024</span>
<div class="abs" style="left:871.05px;top:565.10px;width:21px;height:17px;box-sizing:border-box;border:2px solid #1d1f27;border-radius:8.5px;background:#1d4aff"></div>
<span class="t" style="left:881.55px;transform:translateX(-50%);top:567.90px;line-height:12px;font-size:11px;font-weight:700;color:#161a33;">9+</span>
<span class="t" style="right:723.85px;margin-right:-0.421px;top:583.20px;line-height:14px;font-size:12.5px;font-weight:400;color:#fff;letter-spacing:0.421px;transform-origin:100% 50%;transform:rotate(-45deg);-webkit-text-stroke:0.35px #fff;">10-Jun-2024</span>
<div class="abs" style="left:902.55px;top:565.10px;width:17px;height:17px;box-sizing:border-box;border:2px solid #1d1f27;border-radius:8.5px;background:#1d4aff"></div>
<span class="t" style="left:911.05px;transform:translateX(-50%);top:567.90px;line-height:12px;font-size:11px;font-weight:700;color:#161a33;">6</span>
</section>
<section aria-label="Weekly Hours Watched">
<div class="card" style="left:950px;top:201px;width:612px;height:464px"></div>
<div class="hr" style="left:951px;top:284px;width:610px"></div>
<div class="abs" style="left:963px;top:218px;width:6px;height:49px;background:#2a2c33;border-radius:3px"></div>
<span class="t" style="left:980.30px;top:222.50px;line-height:15px;font-size:11.5px;font-weight:700;color:#8e9096;letter-spacing:0.276px;">TRENDS • LAST 180 DAYS</span>
<span class="t" style="left:980.30px;top:245.00px;line-height:20px;font-size:15.5px;font-weight:700;color:#fff;letter-spacing:0.213px;">Weekly Hours Watched</span>
<svg style="left:1517px;top:227px" width="20" height="6" viewBox="0 0 20 6"><circle cx="3.0" cy="3" r="1.2" fill="#e6e6e8"/><circle cx="10.0" cy="3" r="1.2" fill="#e6e6e8"/><circle cx="17.0" cy="3" r="1.2" fill="#e6e6e8"/></svg>
<svg style="left:1394.3px;top:223.5px" width="16.2" height="12.6" viewBox="0 0 18 14"><g class="icw" stroke-width="1.6"><rect x=".9" y=".9" width="16.2" height="12.2" rx="1.6"/><path d="M4.4 5.4H5M7.6 5.4H13.6M4.4 8.8H10.4M13 8.8H13.6" stroke-width="1.7"/></g></svg>
<span class="t" style="left:1415.90px;top:221.00px;line-height:18px;font-size:14px;font-weight:700;color:#fff;letter-spacing:-0.325px;">Show details</span>
<svg style="left:0px;top:0px" width="1639" height="1162" viewBox="0 0 1639 1162"><line x1="1023.5" y1="303.3" x2="1538.56" y2="303.3" stroke="#53555c" stroke-width="1" stroke-dasharray="4 4"/><line x1="1023.5" y1="347.1166666666667" x2="1538.56" y2="347.1166666666667" stroke="#53555c" stroke-width="1" stroke-dasharray="4 4"/><line x1="1023.5" y1="390.93333333333334" x2="1538.56" y2="390.93333333333334" stroke="#53555c" stroke-width="1" stroke-dasharray="4 4"/><line x1="1023.5" y1="434.75" x2="1538.56" y2="434.75" stroke="#53555c" stroke-width="1" stroke-dasharray="4 4"/><line x1="1023.5" y1="478.5666666666667" x2="1538.56" y2="478.5666666666667" stroke="#53555c" stroke-width="1" stroke-dasharray="4 4"/><line x1="1023.5" y1="522.3833333333333" x2="1538.56" y2="522.3833333333333" stroke="#53555c" stroke-width="1" stroke-dasharray="4 4"/><line x1="1015.3" y1="303.3" x2="1023.5" y2="303.3" stroke="#5a5c63" stroke-width="1"/><line x1="1015.3" y1="347.1166666666667" x2="1023.5" y2="347.1166666666667" stroke="#5a5c63" stroke-width="1"/><line x1="1015.3" y1="390.93333333333334" x2="1023.5" y2="390.93333333333334" stroke="#5a5c63" stroke-width="1"/><line x1="1015.3" y1="434.75" x2="1023.5" y2="434.75" stroke="#5a5c63" stroke-width="1"/><line x1="1015.3" y1="478.5666666666667" x2="1023.5" y2="478.5666666666667" stroke="#5a5c63" stroke-width="1"/><line x1="1015.3" y1="522.3833333333333" x2="1023.5" y2="522.3833333333333" stroke="#5a5c63" stroke-width="1"/><line x1="1015.3" y1="566.2" x2="1023.5" y2="566.2" stroke="#5a5c63" stroke-width="1"/><line x1="1023.5" y1="303.3" x2="1023.5" y2="577.7" stroke="#5a5c63" stroke-width="1"/><line x1="1023.5" y1="566.2" x2="1538.56" y2="566.2" stroke="#5a5c63" stroke-width="1"/><line x1="1063.12" y1="566.2" x2="1063.12" y2="577.7" stroke="#5a5c63" stroke-width="1"/><line x1="1102.74" y1="566.2" x2="1102.74" y2="577.7" stroke="#5a5c63" stroke-width="1"/><line x1="1142.36" y1="566.2" x2="1142.36" y2="577.7" stroke="#5a5c63" stroke-width="1"/><line x1="1181.98" y1="566.2" x2="1181.98" y2="577.7" stroke="#5a5c63" stroke-width="1"/><line x1="1221.60" y1="566.2" x2="1221.60" y2="577.7" stroke="#5a5c63" stroke-width="1"/><line x1="1261.22" y1="566.2" x2="1261.22" y2="577.7" stroke="#5a5c63" stroke-width="1"/><line x1="1300.84" y1="566.2" x2="1300.84" y2="577.7" stroke="#5a5c63" stroke-width="1"/><line x1="1340.46" y1="566.2" x2="1340.46" y2="577.7" stroke="#5a5c63" stroke-width="1"/><line x1="1380.08" y1="566.2" x2="1380.08" y2="577.7" stroke="#5a5c63" stroke-width="1"/><line x1="1419.70" y1="566.2" x2="1419.70" y2="577.7" stroke="#5a5c63" stroke-width="1"/><line x1="1459.32" y1="566.2" x2="1459.32" y2="577.7" stroke="#5a5c63" stroke-width="1"/><line x1="1498.94" y1="566.2" x2="1498.94" y2="577.7" stroke="#5a5c63" stroke-width="1"/><line x1="1538.56" y1="566.2" x2="1538.56" y2="577.7" stroke="#5a5c63" stroke-width="1"/><defs><pattern id="st1" width="11" height="11" patternUnits="userSpaceOnUse" patternTransform="rotate(-30)"><rect width="11" height="11" fill="#3136b4"/><rect y="5.5" width="11" height="5.5" fill="#222a5e"/></pattern><pattern id="st2" width="11" height="11" patternUnits="userSpaceOnUse" patternTransform="rotate(-30)"><rect width="11" height="11" fill="#412463"/><rect y="5.5" width="11" height="5.5" fill="#2a2340"/></pattern></defs><path d="M1023.50 500.88 L1043.31 379.84 L1063.12 477.17 L1082.93 404.80 L1102.74 340.66 L1122.55 360.38 L1142.36 361.38 L1162.17 379.84 L1181.98 340.66 L1201.79 321.20 L1221.60 318.20 L1241.41 329.43 L1261.22 349.90 L1281.03 313.71 L1300.84 309.97 L1320.65 336.42 L1340.46 323.19 L1360.27 312.46 L1380.08 331.18 L1399.89 349.15 L1419.70 360.63 L1439.51 359.13 L1459.32 347.65 L1479.13 348.40 L1498.94 347.15 L1518.75 341.91 L1518.75 410.54 L1498.94 414.03 L1479.13 409.29 L1459.32 410.79 L1439.51 418.77 L1419.70 418.28 L1399.89 413.78 L1380.08 402.30 L1360.27 388.58 L1340.46 393.07 L1320.65 404.55 L1300.84 388.33 L1281.03 392.32 L1261.22 413.03 L1241.41 399.81 L1221.60 391.82 L1201.79 395.32 L1181.98 411.54 L1162.17 434.25 L1142.36 417.28 L1122.55 423.52 L1102.74 411.29 L1082.93 449.72 L1063.12 495.89 L1043.31 434.25 L1023.50 560.03z" fill="#412463"/><path d="M1023.50 560.03 L1043.31 434.25 L1063.12 495.89 L1082.93 449.72 L1102.74 411.29 L1122.55 423.52 L1142.36 417.28 L1162.17 434.25 L1181.98 411.54 L1201.79 395.32 L1221.60 391.82 L1241.41 399.81 L1261.22 413.03 L1281.03 392.32 L1300.84 388.33 L1320.65 404.55 L1340.46 393.07 L1360.27 388.58 L1380.08 402.30 L1399.89 413.78 L1419.70 418.28 L1439.51 418.77 L1459.32 410.79 L1479.13 409.29 L1498.94 414.03 L1518.75 410.54 L1518.75 566.2 L1023.5 566.2z" fill="#3136b4"/><path d="M1518.75 341.91 L1538.56 564.52 L1538.56 565.52 L1518.75 410.54z" fill="url(#st2)"/><path d="M1518.75 410.54 L1538.56 565.52 L1538.56 566.2 L1518.75 566.2z" fill="url(#st1)"/><g opacity="0.14"><line x1="1023.5" y1="347.1166666666667" x2="1538.56" y2="347.1166666666667" stroke="#8a8cc0" stroke-width="1" stroke-dasharray="4 4"/><line x1="1023.5" y1="390.93333333333334" x2="1538.56" y2="390.93333333333334" stroke="#8a8cc0" stroke-width="1" stroke-dasharray="4 4"/><line x1="1023.5" y1="434.75" x2="1538.56" y2="434.75" stroke="#8a8cc0" stroke-width="1" stroke-dasharray="4 4"/><line x1="1023.5" y1="478.5666666666667" x2="1538.56" y2="478.5666666666667" stroke="#8a8cc0" stroke-width="1" stroke-dasharray="4 4"/><line x1="1023.5" y1="522.3833333333333" x2="1538.56" y2="522.3833333333333" stroke="#8a8cc0" stroke-width="1" stroke-dasharray="4 4"/></g><path d="M1023.50 500.88 L1043.31 379.84 L1063.12 477.17 L1082.93 404.80 L1102.74 340.66 L1122.55 360.38 L1142.36 361.38 L1162.17 379.84 L1181.98 340.66 L1201.79 321.20 L1221.60 318.20 L1241.41 329.43 L1261.22 349.90 L1281.03 313.71 L1300.84 309.97 L1320.65 336.42 L1340.46 323.19 L1360.27 312.46 L1380.08 331.18 L1399.89 349.15 L1419.70 360.63 L1439.51 359.13 L1459.32 347.65 L1479.13 348.40 L1498.94 347.15 L1518.75 341.91" fill="none" stroke="#621da6" stroke-width="2" stroke-linejoin="round"/><path d="M1023.50 560.03 L1043.31 434.25 L1063.12 495.89 L1082.93 449.72 L1102.74 411.29 L1122.55 423.52 L1142.36 417.28 L1162.17 434.25 L1181.98 411.54 L1201.79 395.32 L1221.60 391.82 L1241.41 399.81 L1261.22 413.03 L1281.03 392.32 L1300.84 388.33 L1320.65 404.55 L1340.46 393.07 L1360.27 388.58 L1380.08 402.30 L1399.89 413.78 L1419.70 418.28 L1439.51 418.77 L1459.32 410.79 L1479.13 409.29 L1498.94 414.03 L1518.75 410.54" fill="none" stroke="#1d4aff" stroke-width="2" stroke-linejoin="round"/><path d="M1518.75 341.91 L1538.56 564.52" fill="none" stroke="#621da6" stroke-width="2" stroke-dasharray="8 7"/><path d="M1518.75 410.54 L1538.56 565.52" fill="none" stroke="#1d4aff" stroke-width="2" stroke-dasharray="8 7"/></svg>
<span class="t" style="right:627.20px;margin-right:-0.339px;top:295.60px;line-height:16px;font-size:12.5px;font-weight:400;color:#fff;letter-spacing:0.339px;-webkit-text-stroke:0.35px #fff;">120,000</span>
<span class="t" style="right:627.20px;margin-right:-0.339px;top:339.42px;line-height:16px;font-size:12.5px;font-weight:400;color:#fff;letter-spacing:0.339px;-webkit-text-stroke:0.35px #fff;">100,000</span>
<span class="t" style="right:627.20px;margin-right:-0.344px;top:383.23px;line-height:16px;font-size:12.5px;font-weight:400;color:#fff;letter-spacing:0.344px;-webkit-text-stroke:0.35px #fff;">80,000</span>
<span class="t" style="right:627.20px;margin-right:-0.344px;top:427.05px;line-height:16px;font-size:12.5px;font-weight:400;color:#fff;letter-spacing:0.344px;-webkit-text-stroke:0.35px #fff;">60,000</span>
<span class="t" style="right:627.20px;margin-right:-0.344px;top:470.87px;line-height:16px;font-size:12.5px;font-weight:400;color:#fff;letter-spacing:0.344px;-webkit-text-stroke:0.35px #fff;">40,000</span>
<span class="t" style="right:627.20px;margin-right:-0.344px;top:514.68px;line-height:16px;font-size:12.5px;font-weight:400;color:#fff;letter-spacing:0.344px;-webkit-text-stroke:0.35px #fff;">20,000</span>
<span class="t" style="right:627.20px;margin-right:-0.313px;top:558.50px;line-height:16px;font-size:12.5px;font-weight:400;color:#fff;letter-spacing:0.313px;-webkit-text-stroke:0.35px #fff;">0</span>
<span class="t" style="right:611.50px;margin-right:-0.535px;top:579.30px;line-height:14px;font-size:12.5px;font-weight:400;color:#fff;letter-spacing:0.535px;transform-origin:100% 50%;transform:rotate(-49deg);-webkit-text-stroke:0.35px #fff;">11-Dec-2023</span>
<span class="t" style="right:571.88px;margin-right:-0.542px;top:579.30px;line-height:14px;font-size:12.5px;font-weight:400;color:#fff;letter-spacing:0.542px;transform-origin:100% 50%;transform:rotate(-49deg);-webkit-text-stroke:0.35px #fff;">25-Dec-2023</span>
<span class="t" style="right:532.26px;margin-right:-0.527px;top:579.30px;line-height:14px;font-size:12.5px;font-weight:400;color:#fff;letter-spacing:0.527px;transform-origin:100% 50%;transform:rotate(-49deg);-webkit-text-stroke:0.35px #fff;">8-Jan-2024</span>
<span class="t" style="right:492.64px;margin-right:-0.527px;top:579.30px;line-height:14px;font-size:12.5px;font-weight:400;color:#fff;letter-spacing:0.527px;transform-origin:100% 50%;transform:rotate(-49deg);-webkit-text-stroke:0.35px #fff;">22-Jan-2024</span>
<span class="t" style="right:453.02px;margin-right:-0.539px;top:579.30px;line-height:14px;font-size:12.5px;font-weight:400;color:#fff;letter-spacing:0.539px;transform-origin:100% 50%;transform:rotate(-49deg);-webkit-text-stroke:0.35px #fff;">5-Feb-2024</span>
<span class="t" style="right:413.40px;margin-right:-0.537px;top:579.30px;line-height:14px;font-size:12.5px;font-weight:400;color:#fff;letter-spacing:0.537px;transform-origin:100% 50%;transform:rotate(-49deg);-webkit-text-stroke:0.35px #fff;">19-Feb-2024</span>
<span class="t" style="right:373.78px;margin-right:-0.539px;top:579.30px;line-height:14px;font-size:12.5px;font-weight:400;color:#fff;letter-spacing:0.539px;transform-origin:100% 50%;transform:rotate(-49deg);-webkit-text-stroke:0.35px #fff;">4-Mar-2024</span>
<span class="t" style="right:334.16px;margin-right:-0.537px;top:579.30px;line-height:14px;font-size:12.5px;font-weight:400;color:#fff;letter-spacing:0.537px;transform-origin:100% 50%;transform:rotate(-49deg);-webkit-text-stroke:0.35px #fff;">18-Mar-2024</span>
<span class="t" style="right:294.54px;margin-right:-0.521px;top:579.30px;line-height:14px;font-size:12.5px;font-weight:400;color:#fff;letter-spacing:0.521px;transform-origin:100% 50%;transform:rotate(-49deg);-webkit-text-stroke:0.35px #fff;">1-Apr-2024</span>
<div class="abs" style="left:1330.26px;top:557.90px;width:21px;height:17px;box-sizing:border-box;border:2px solid #1d1f27;border-radius:8.5px;background:#1d4aff"></div>
<span class="t" style="left:1340.76px;transform:translateX(-50%);top:560.70px;line-height:12px;font-size:11px;font-weight:700;color:#161a33;">9+</span>
<span class="t" style="right:254.92px;margin-right:-0.521px;top:579.30px;line-height:14px;font-size:12.5px;font-weight:400;color:#fff;letter-spacing:0.521px;transform-origin:100% 50%;transform:rotate(-49deg);-webkit-text-stroke:0.35px #fff;">15-Apr-2024</span>
<div class="abs" style="left:1369.88px;top:557.90px;width:21px;height:17px;box-sizing:border-box;border:2px solid #1d1f27;border-radius:8.5px;background:#1d4aff"></div>
<span class="t" style="left:1380.38px;transform:translateX(-50%);top:560.70px;line-height:12px;font-size:11px;font-weight:700;color:#161a33;">9+</span>
<span class="t" style="right:215.30px;margin-right:-0.521px;top:579.30px;line-height:14px;font-size:12.5px;font-weight:400;color:#fff;letter-spacing:0.521px;transform-origin:100% 50%;transform:rotate(-49deg);-webkit-text-stroke:0.35px #fff;">29-Apr-2024</span>
<div class="abs" style="left:1409.50px;top:557.90px;width:21px;height:17px;box-sizing:border-box;border:2px solid #1d1f27;border-radius:8.5px;background:#1d4aff"></div>
<span class="t" style="left:1420.00px;transform:translateX(-50%);top:560.70px;line-height:12px;font-size:11px;font-weight:700;color:#161a33;">9+</span>
<span class="t" style="right:175.68px;margin-right:-0.552px;top:579.30px;line-height:14px;font-size:12.5px;font-weight:400;color:#fff;letter-spacing:0.552px;transform-origin:100% 50%;transform:rotate(-49deg);-webkit-text-stroke:0.35px #fff;">13-May-2024</span>
<div class="abs" style="left:1449.12px;top:557.90px;width:21px;height:17px;box-sizing:border-box;border:2px solid #1d1f27;border-radius:8.5px;background:#1d4aff"></div>
<span class="t" style="left:1459.62px;transform:translateX(-50%);top:560.70px;line-height:12px;font-size:11px;font-weight:700;color:#161a33;">9+</span>
<span class="t" style="right:136.06px;margin-right:-0.552px;top:579.30px;line-height:14px;font-size:12.5px;font-weight:400;color:#fff;letter-spacing:0.552px;transform-origin:100% 50%;transform:rotate(-49deg);-webkit-text-stroke:0.35px #fff;">27-May-2024</span>
<div class="abs" style="left:1488.74px;top:557.90px;width:21px;height:17px;box-sizing:border-box;border:2px solid #1d1f27;border-radius:8.5px;background:#1d4aff"></div>
<span class="t" style="left:1499.24px;transform:translateX(-50%);top:560.70px;line-height:12px;font-size:11px;font-weight:700;color:#161a33;">9+</span>
<span class="t" style="right:96.44px;margin-right:-0.527px;top:579.30px;line-height:14px;font-size:12.5px;font-weight:400;color:#fff;letter-spacing:0.527px;transform-origin:100% 50%;transform:rotate(-49deg);-webkit-text-stroke:0.35px #fff;">10-Jun-2024</span>
<div class="abs" style="left:1530.36px;top:557.90px;width:17px;height:17px;box-sizing:border-box;border:2px solid #1d1f27;border-radius:8.5px;background:#1d4aff"></div>
<span class="t" style="left:1538.86px;transform:translateX(-50%);top:560.70px;line-height:12px;font-size:11px;font-weight:700;color:#161a33;">5</span>
</section>
<section aria-label="Free Trial Conversion (By Device)">
<div class="card" style="left:70px;top:681px;width:864px;height:464px"></div>
<div class="hr" style="left:71px;top:764px;width:862px"></div>
<span class="t" style="left:86.30px;top:702.50px;line-height:15px;font-size:11.5px;font-weight:700;color:#8e9096;letter-spacing:0.252px;">FUNNEL • LAST 90 DAYS</span>
<span class="t" style="left:86.30px;top:725.00px;line-height:20px;font-size:15.5px;font-weight:700;color:#fff;letter-spacing:-0.129px;">Free Trial Conversion (By Device)</span>
<svg style="left:889px;top:707px" width="20" height="6" viewBox="0 0 20 6"><circle cx="3.0" cy="3" r="1.2" fill="#e6e6e8"/><circle cx="10.0" cy="3" r="1.2" fill="#e6e6e8"/><circle cx="17.0" cy="3" r="1.2" fill="#e6e6e8"/></svg>
<svg style="left:766.3px;top:703.5px" width="16.2" height="12.6" viewBox="0 0 18 14"><g class="icw" stroke-width="1.6"><rect x=".9" y=".9" width="16.2" height="12.2" rx="1.6"/><path d="M4.4 5.4H5M7.6 5.4H13.6M4.4 8.8H10.4M13 8.8H13.6" stroke-width="1.7"/></g></svg>
<span class="t" style="left:787.90px;top:701.00px;line-height:18px;font-size:14px;font-weight:700;color:#fff;letter-spacing:-0.325px;">Show details</span>
<div class="abs" style="left:99px;top:803px;width:1px;height:178px;background:#3a3c43"></div>
<div class="abs" style="left:88.5px;top:781.7px;width:22px;height:22px;border-radius:50%;border:2px solid #33353c;background:#21242d;box-sizing:border-box"></div>
<span class="t" style="left:99.50px;transform:translateX(-50%);top:783.90px;line-height:18px;font-size:14px;font-weight:700;color:#fff;">1</span>
<span class="t" style="left:118.70px;top:784.20px;line-height:18px;font-size:14px;font-weight:700;color:#fff;letter-spacing:0.432px;">Started Trial</span>
<span class="t" style="left:208.30px;top:785.70px;line-height:16px;font-size:12px;font-weight:700;color:#9b9da2;letter-spacing:0.557px;">Pageview</span>
<svg style="left:272.3px;top:790px" width="20" height="6" viewBox="0 0 20 6"><circle cx="3" cy="3" r="1.1" fill="#e6e6e8"/><circle cx="10" cy="3" r="1.1" fill="#e6e6e8"/><circle cx="17" cy="3" r="1.1" fill="#e6e6e8"/></svg>
<div class="abs" style="left:119px;top:808.2px;width:798px;height:31.6px;border-radius:4px;background:#35373f;overflow:hidden"><div class="abs" style="left:0;top:0;height:100%;width:651.0px;background:#1d4aff"></div><div class="abs" style="left:651.0px;top:0;height:100%;width:144.3px;background:#621da6;border-radius:0 4px 4px 0"></div></div>
<svg style="left:123px;top:850.8px" width="17" height="10" viewBox="0 0 17 10"><path d="M1 5H15M11 1.4L15 5L11 8.6" fill="none" stroke="#3f921d" stroke-width="1.8" stroke-linecap="round" stroke-linejoin="round"/></svg>
<span class="t" style="left:146.80px;top:846.80px;line-height:18px;font-size:14px;font-weight:700;color:#fff;letter-spacing:0.548px;">25,138 persons</span>
<span class="t" style="left:259.10px;top:846.80px;line-height:18px;font-size:14px;font-weight:400;color:#9b9da2;letter-spacing:0.494px;">(100.00%) completed step</span>
<div class="abs" style="left:88.5px;top:880.7px;width:22px;height:22px;border-radius:50%;border:2px solid #33353c;background:#21242d;box-sizing:border-box"></div>
<span class="t" style="left:99.50px;transform:translateX(-50%);top:882.90px;line-height:18px;font-size:14px;font-weight:700;color:#fff;">2</span>
<span class="t" style="left:118.70px;top:883.20px;line-height:18px;font-size:14px;font-weight:700;color:#fff;letter-spacing:0.451px;">Viewed content</span>
<span class="t" style="left:229.80px;top:884.70px;line-height:16px;font-size:12px;font-weight:700;color:#9b9da2;letter-spacing:0.557px;">Pageview</span>
<svg style="left:295.59999999999997px;top:883.5px" width="17" height="17" viewBox="0 0 17 17"><circle cx="8.5" cy="8.5" r="7.6" fill="none" stroke="#9b9da2" stroke-width="1.2"/><path d="M8.5 7.6v4.4" stroke="#9b9da2" stroke-width="1.3"/><circle cx="8.5" cy="5.3" r=".8" fill="#9b9da2"/></svg>
<svg style="left:320px;top:889px" width="20" height="6" viewBox="0 0 20 6"><circle cx="3" cy="3" r="1.1" fill="#e6e6e8"/><circle cx="10" cy="3" r="1.1" fill="#e6e6e8"/><circle cx="17" cy="3" r="1.1" fill="#e6e6e8"/></svg>
<div class="abs" style="left:119px;top:907.2px;width:798px;height:31.6px;border-radius:4px;background:#35373f;overflow:hidden"><div class="abs" style="left:0;top:0;height:100%;width:254.8px;background:#1d4aff"></div><div class="abs" style="left:254.8px;top:0;height:100%;width:51.3px;background:#621da6;border-radius:0 4px 4px 0"></div></div>
<span class="t" style="left:432.80px;top:914.10px;line-height:18px;font-size:14px;font-weight:700;color:#fff;letter-spacing:1.874px;">38.4%</span>
<svg style="left:123px;top:949.8px" width="17" height="10" viewBox="0 0 17 10"><path d="M1 5H15M11 1.4L15 5L11 8.6" fill="none" stroke="#3f921d" stroke-width="1.8" stroke-linecap="round" stroke-linejoin="round"/></svg>
<span class="t" style="left:146.80px;top:945.80px;line-height:18px;font-size:14px;font-weight:700;color:#fff;letter-spacing:0.484px;">9,669 persons</span>
<span class="t" style="left:249.30px;top:945.80px;line-height:18px;font-size:14px;font-weight:400;color:#9b9da2;letter-spacing:0.507px;">(38.46%) completed step</span>
<svg style="left:640.5px;top:947.8px" width="14" height="14" viewBox="0 0 14 14"><path d="M1.6 1.6L12 12M5.4 12.2H12.2V5.4" fill="none" stroke="#c77f1d" stroke-width="1.9" stroke-linecap="round" stroke-linejoin="round"/></svg>
<span class="t" style="left:664.10px;top:945.80px;line-height:18px;font-size:14px;font-weight:700;color:#fff;letter-spacing:0.494px;">15,469 persons</span>
<span class="t" style="left:774.80px;top:945.80px;line-height:18px;font-size:14px;font-weight:400;color:#9b9da2;letter-spacing:0.606px;">(61.54%) dropped off</span>
<div class="abs" style="left:88.5px;top:979.7px;width:22px;height:22px;border-radius:50%;border:2px solid #33353c;background:#21242d;box-sizing:border-box"></div>
<span class="t" style="left:99.50px;transform:translateX(-50%);top:981.90px;line-height:18px;font-size:14px;font-weight:700;color:#fff;">3</span>
<span class="t" style="left:118.70px;top:982.20px;line-height:18px;font-size:14px;font-weight:700;color:#fff;letter-spacing:0.421px;">Completed trial</span>
<span class="t" style="left:229.10px;top:983.70px;line-height:16px;font-size:12px;font-weight:700;color:#9b9da2;letter-spacing:0.557px;">Pageview</span>
<svg style="left:294.59999999999997px;top:982.5px" width="17" height="17" viewBox="0 0 17 17"><circle cx="8.5" cy="8.5" r="7.6" fill="none" stroke="#9b9da2" stroke-width="1.2"/><path d="M8.5 7.6v4.4" stroke="#9b9da2" stroke-width="1.3"/><circle cx="8.5" cy="5.3" r=".8" fill="#9b9da2"/></svg>
<svg style="left:319px;top:988px" width="20" height="6" viewBox="0 0 20 6"><circle cx="3" cy="3" r="1.1" fill="#e6e6e8"/><circle cx="10" cy="3" r="1.1" fill="#e6e6e8"/><circle cx="17" cy="3" r="1.1" fill="#e6e6e8"/></svg>
<div class="abs" style="left:119px;top:1006.2px;width:798px;height:31.6px;border-radius:4px;background:#35373f;overflow:hidden"><div class="abs" style="left:0;top:0;height:100%;width:178.0px;background:#1d4aff"></div><div class="abs" style="left:178.0px;top:0;height:100%;width:32.0px;background:#621da6;border-radius:0 4px 4px 0"></div></div>
<span class="t" style="left:336.80px;top:1013.10px;line-height:18px;font-size:14px;font-weight:700;color:#fff;letter-spacing:1.874px;">26.3%</span>
<svg style="left:123px;top:1048.8px" width="17" height="10" viewBox="0 0 17 10"><path d="M1 5H15M11 1.4L15 5L11 8.6" fill="none" stroke="#3f921d" stroke-width="1.8" stroke-linecap="round" stroke-linejoin="round"/></svg>
<span class="t" style="left:146.80px;top:1044.80px;line-height:18px;font-size:14px;font-weight:700;color:#fff;letter-spacing:0.484px;">6,631 persons</span>
<span class="t" style="left:249.30px;top:1044.80px;line-height:18px;font-size:14px;font-weight:400;color:#9b9da2;letter-spacing:0.507px;">(68.58%) completed step</span>
<svg style="left:650.3px;top:1046.8px" width="14" height="14" viewBox="0 0 14 14"><path d="M1.6 1.6L12 12M5.4 12.2H12.2V5.4" fill="none" stroke="#c77f1d" stroke-width="1.9" stroke-linecap="round" stroke-linejoin="round"/></svg>
<span class="t" style="left:672.30px;top:1044.80px;line-height:18px;font-size:14px;font-weight:700;color:#fff;letter-spacing:0.501px;">3,038 persons</span>
<span class="t" style="left:774.80px;top:1044.80px;line-height:18px;font-size:14px;font-weight:400;color:#9b9da2;letter-spacing:0.606px;">(31.42%) dropped off</span>
</section>
<section aria-label="Free Trial Conversion (Trend in Last 90 Days)">
<div class="card" style="left:950px;top:681px;width:612px;height:464px"></div>
<div class="hr" style="left:951px;top:764px;width:610px"></div>
<span class="t" style="left:966.30px;top:702.50px;line-height:15px;font-size:11.5px;font-weight:700;color:#8e9096;letter-spacing:0.252px;">FUNNEL • LAST 90 DAYS</span>
<span class="t" style="left:966.30px;top:725.00px;line-height:20px;font-size:15.5px;font-weight:700;color:#fff;letter-spacing:-0.089px;">Free Trial Conversion (Trend in Last 90 Days)</span>
<svg style="left:1517px;top:707px" width="20" height="6" viewBox="0 0 20 6"><circle cx="3.0" cy="3" r="1.2" fill="#e6e6e8"/><circle cx="10.0" cy="3" r="1.2" fill="#e6e6e8"/><circle cx="17.0" cy="3" r="1.2" fill="#e6e6e8"/></svg>
<svg style="left:1394.3px;top:703.5px" width="16.2" height="12.6" viewBox="0 0 18 14"><g class="icw" stroke-width="1.6"><rect x=".9" y=".9" width="16.2" height="12.2" rx="1.6"/><path d="M4.4 5.4H5M7.6 5.4H13.6M4.4 8.8H10.4M13 8.8H13.6" stroke-width="1.7"/></g></svg>
<span class="t" style="left:1415.90px;top:701.00px;line-height:18px;font-size:14px;font-weight:700;color:#fff;letter-spacing:-0.325px;">Show details</span>
<svg style="left:0px;top:0px" width="1639" height="1162" viewBox="0 0 1639 1162"><line x1="1030.5" y1="783.5" x2="1542.31" y2="783.5" stroke="#53555c" stroke-width="1" stroke-dasharray="4 4"/><line x1="1030.5" y1="823.5" x2="1542.31" y2="823.5" stroke="#53555c" stroke-width="1" stroke-dasharray="4 4"/><line x1="1030.5" y1="863.5" x2="1542.31" y2="863.5" stroke="#53555c" stroke-width="1" stroke-dasharray="4 4"/><line x1="1030.5" y1="903.5" x2="1542.31" y2="903.5" stroke="#53555c" stroke-width="1" stroke-dasharray="4 4"/><line x1="1030.5" y1="943.5" x2="1542.31" y2="943.5" stroke="#53555c" stroke-width="1" stroke-dasharray="4 4"/><line x1="1030.5" y1="983.5" x2="1542.31" y2="983.5" stroke="#53555c" stroke-width="1" stroke-dasharray="4 4"/><line x1="1030.5" y1="1023.5" x2="1542.31" y2="1023.5" stroke="#53555c" stroke-width="1" stroke-dasharray="4 4"/><line x1="1022.3" y1="783.5" x2="1030.5" y2="783.5" stroke="#5a5c63" stroke-width="1"/><line x1="1022.3" y1="823.5" x2="1030.5" y2="823.5" stroke="#5a5c63" stroke-width="1"/><line x1="1022.3" y1="863.5" x2="1030.5" y2="863.5" stroke="#5a5c63" stroke-width="1"/><line x1="1022.3" y1="903.5" x2="1030.5" y2="903.5" stroke="#5a5c63" stroke-width="1"/><line x1="1022.3" y1="943.5" x2="1030.5" y2="943.5" stroke="#5a5c63" stroke-width="1"/><line x1="1022.3" y1="983.5" x2="1030.5" y2="983.5" stroke="#5a5c63" stroke-width="1"/><line x1="1022.3" y1="1023.5" x2="1030.5" y2="1023.5" stroke="#5a5c63" stroke-width="1"/><line x1="1022.3" y1="1063.5" x2="1030.5" y2="1063.5" stroke="#5a5c63" stroke-width="1"/><line x1="1030.5" y1="783.5" x2="1030.5" y2="1074.8" stroke="#5a5c63" stroke-width="1"/><line x1="1030.5" y1="1063.5" x2="1542.31" y2="1063.5" stroke="#5a5c63" stroke-width="1"/><line x1="1069.87" y1="1063.5" x2="1069.87" y2="1074.8" stroke="#5a5c63" stroke-width="1"/><line x1="1109.24" y1="1063.5" x2="1109.24" y2="1074.8" stroke="#5a5c63" stroke-width="1"/><line x1="1148.61" y1="1063.5" x2="1148.61" y2="1074.8" stroke="#5a5c63" stroke-width="1"/><line x1="1187.98" y1="1063.5" x2="1187.98" y2="1074.8" stroke="#5a5c63" stroke-width="1"/><line x1="1227.35" y1="1063.5" x2="1227.35" y2="1074.8" stroke="#5a5c63" stroke-width="1"/><line x1="1266.72" y1="1063.5" x2="1266.72" y2="1074.8" stroke="#5a5c63" stroke-width="1"/><line x1="1306.09" y1="1063.5" x2="1306.09" y2="1074.8" stroke="#5a5c63" stroke-width="1"/><line x1="1345.46" y1="1063.5" x2="1345.46" y2="1074.8" stroke="#5a5c63" stroke-width="1"/><line x1="1384.83" y1="1063.5" x2="1384.83" y2="1074.8" stroke="#5a5c63" stroke-width="1"/><line x1="1424.20" y1="1063.5" x2="1424.20" y2="1074.8" stroke="#5a5c63" stroke-width="1"/><line x1="1463.57" y1="1063.5" x2="1463.57" y2="1074.8" stroke="#5a5c63" stroke-width="1"/><line x1="1502.94" y1="1063.5" x2="1502.94" y2="1074.8" stroke="#5a5c63" stroke-width="1"/><line x1="1542.31" y1="1063.5" x2="1542.31" y2="1074.8" stroke="#5a5c63" stroke-width="1"/><path d="M1030.50 819.10 L1069.87 827.30 L1109.24 815.80 L1148.61 818.70 L1187.98 818.10 L1227.35 809.70 L1266.72 815.30 L1306.09 831.70 L1345.46 812.60 L1384.83 811.20 L1424.20 853.40 L1463.57 814.90 L1502.94 828.60" fill="none" stroke="#1d4aff" stroke-width="2" stroke-linejoin="round"/><path d="M1502.94 828.60 L1542.31 876.40" fill="none" stroke="#1d4aff" stroke-width="2" stroke-dasharray="10 10"/></svg>
<span class="t" style="right:620.20px;margin-right:-0.563px;top:775.80px;line-height:16px;font-size:12.5px;font-weight:400;color:#fff;letter-spacing:0.563px;-webkit-text-stroke:0.35px #fff;">35%</span>
<span class="t" style="right:620.20px;margin-right:-0.563px;top:815.80px;line-height:16px;font-size:12.5px;font-weight:400;color:#fff;letter-spacing:0.563px;-webkit-text-stroke:0.35px #fff;">30%</span>
<span class="t" style="right:620.20px;margin-right:-0.563px;top:855.80px;line-height:16px;font-size:12.5px;font-weight:400;color:#fff;letter-spacing:0.563px;-webkit-text-stroke:0.35px #fff;">25%</span>
<span class="t" style="right:620.20px;margin-right:-0.563px;top:895.80px;line-height:16px;font-size:12.5px;font-weight:400;color:#fff;letter-spacing:0.563px;-webkit-text-stroke:0.35px #fff;">20%</span>
<span class="t" style="right:620.20px;margin-right:-0.563px;top:935.80px;line-height:16px;font-size:12.5px;font-weight:400;color:#fff;letter-spacing:0.563px;-webkit-text-stroke:0.35px #fff;">15%</span>
<span class="t" style="right:620.20px;margin-right:-0.563px;top:975.80px;line-height:16px;font-size:12.5px;font-weight:400;color:#fff;letter-spacing:0.563px;-webkit-text-stroke:0.35px #fff;">10%</span>
<span class="t" style="right:620.20px;margin-right:-0.814px;top:1015.80px;line-height:16px;font-size:12.5px;font-weight:400;color:#fff;letter-spacing:0.814px;-webkit-text-stroke:0.35px #fff;">5%</span>
<span class="t" style="right:620.20px;margin-right:-0.814px;top:1055.80px;line-height:16px;font-size:12.5px;font-weight:400;color:#fff;letter-spacing:0.814px;-webkit-text-stroke:0.35px #fff;">0%</span>
<span class="t" style="right:605.80px;margin-right:-0.565px;top:1079.00px;line-height:14px;font-size:12.5px;font-weight:400;color:#fff;letter-spacing:0.565px;transform-origin:100% 50%;transform:rotate(-30.5deg);-webkit-text-stroke:0.35px #fff;">11-Mar-2024</span>
<span class="t" style="right:566.43px;margin-right:-0.573px;top:1079.00px;line-height:14px;font-size:12.5px;font-weight:400;color:#fff;letter-spacing:0.573px;transform-origin:100% 50%;transform:rotate(-30.5deg);-webkit-text-stroke:0.35px #fff;">18-Mar-2024</span>
<span class="t" style="right:527.06px;margin-right:-0.573px;top:1079.00px;line-height:14px;font-size:12.5px;font-weight:400;color:#fff;letter-spacing:0.573px;transform-origin:100% 50%;transform:rotate(-30.5deg);-webkit-text-stroke:0.35px #fff;">25-Mar-2024</span>
<span class="t" style="right:487.69px;margin-right:-0.556px;top:1079.00px;line-height:14px;font-size:12.5px;font-weight:400;color:#fff;letter-spacing:0.556px;transform-origin:100% 50%;transform:rotate(-30.5deg);-webkit-text-stroke:0.35px #fff;">1-Apr-2024</span>
<span class="t" style="right:448.32px;margin-right:-0.556px;top:1079.00px;line-height:14px;font-size:12.5px;font-weight:400;color:#fff;letter-spacing:0.556px;transform-origin:100% 50%;transform:rotate(-30.5deg);-webkit-text-stroke:0.35px #fff;">8-Apr-2024</span>
<span class="t" style="right:408.95px;margin-right:-0.556px;top:1079.00px;line-height:14px;font-size:12.5px;font-weight:400;color:#fff;letter-spacing:0.556px;transform-origin:100% 50%;transform:rotate(-30.5deg);-webkit-text-stroke:0.35px #fff;">15-Apr-2024</span>
<span class="t" style="right:369.58px;margin-right:-0.556px;top:1079.00px;line-height:14px;font-size:12.5px;font-weight:400;color:#fff;letter-spacing:0.556px;transform-origin:100% 50%;transform:rotate(-30.5deg);-webkit-text-stroke:0.35px #fff;">22-Apr-2024</span>
<span class="t" style="right:330.21px;margin-right:-0.556px;top:1079.00px;line-height:14px;font-size:12.5px;font-weight:400;color:#fff;letter-spacing:0.556px;transform-origin:100% 50%;transform:rotate(-30.5deg);-webkit-text-stroke:0.35px #fff;">29-Apr-2024</span>
<span class="t" style="right:290.84px;margin-right:-0.593px;top:1079.00px;line-height:14px;font-size:12.5px;font-weight:400;color:#fff;letter-spacing:0.593px;transform-origin:100% 50%;transform:rotate(-30.5deg);-webkit-text-stroke:0.35px #fff;">6-May-2024</span>
<span class="t" style="right:251.47px;margin-right:-0.589px;top:1079.00px;line-height:14px;font-size:12.5px;font-weight:400;color:#fff;letter-spacing:0.589px;transform-origin:100% 50%;transform:rotate(-30.5deg);-webkit-text-stroke:0.35px #fff;">13-May-2024</span>
<span class="t" style="right:212.10px;margin-right:-0.589px;top:1079.00px;line-height:14px;font-size:12.5px;font-weight:400;color:#fff;letter-spacing:0.589px;transform-origin:100% 50%;transform:rotate(-30.5deg);-webkit-text-stroke:0.35px #fff;">20-May-2024</span>
<span class="t" style="right:172.73px;margin-right:-0.589px;top:1079.00px;line-height:14px;font-size:12.5px;font-weight:400;color:#fff;letter-spacing:0.589px;transform-origin:100% 50%;transform:rotate(-30.5deg);-webkit-text-stroke:0.35px #fff;">27-May-2024</span>
<span class="t" style="right:133.36px;margin-right:-0.562px;top:1079.00px;line-height:14px;font-size:12.5px;font-weight:400;color:#fff;letter-spacing:0.562px;transform-origin:100% 50%;transform:rotate(-30.5deg);-webkit-text-stroke:0.35px #fff;">3-Jun-2024</span>
<span class="t" style="right:93.99px;margin-right:-0.562px;top:1079.00px;line-height:14px;font-size:12.5px;font-weight:400;color:#fff;letter-spacing:0.562px;transform-origin:100% 50%;transform:rotate(-30.5deg);-webkit-text-stroke:0.35px #fff;">10-Jun-2024</span>
</section>
</main>
</body></html>
